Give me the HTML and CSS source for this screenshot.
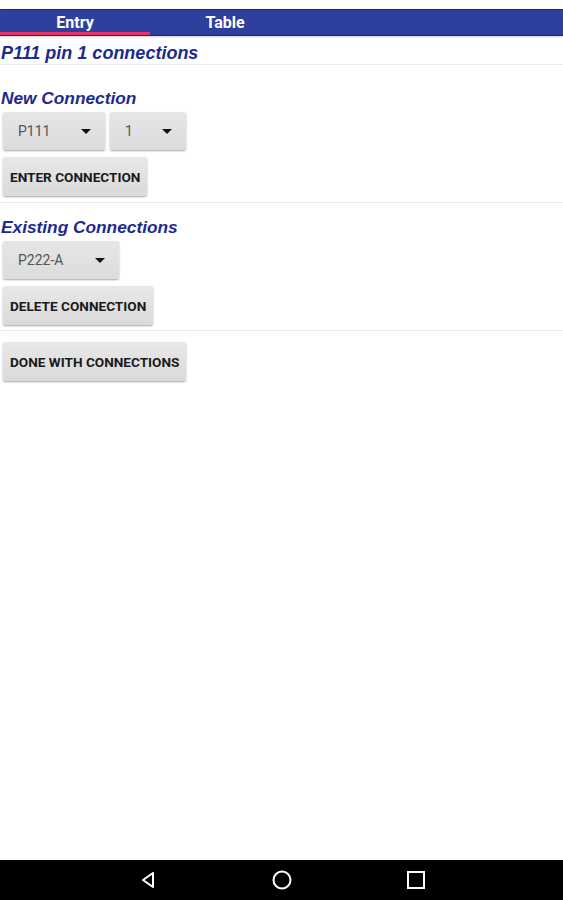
FILE: index.html
```html
<!DOCTYPE html>
<html lang="en">

<head>
    <meta charset="UTF-8">
    <meta name="viewport" content="width=device-width, initial-scale=1.0">
    <title>Connections</title>
    <link rel="stylesheet" href="styles.css">
</head>

<body>
    <div class="screen">
        <div class="tab-bar">
            <div class="tab active">Entry</div>
            <div class="tab">Table</div>
        </div>

        <div class="content">
            <div class="title">P111 pin 1 connections</div>

            <div class="section first">
                <div class="heading">New Connection</div>
                <div class="row">
                    <div class="spinner spin-conn">
                        <span>P111</span>
                        <span class="arrow"></span>
                    </div>
                    <div class="spinner spin-pin">
                        <span>1</span>
                        <span class="arrow"></span>
                    </div>
                </div>
                <button class="btn">ENTER CONNECTION</button>
            </div>

            <div class="section">
                <div class="heading">Existing Connections</div>
                <div class="row">
                    <div class="spinner spin-exist">
                        <span>P222-A</span>
                        <span class="arrow"></span>
                    </div>
                </div>
                <button class="btn">DELETE CONNECTION</button>
            </div>

            <div class="section last">
                <button class="btn">DONE WITH CONNECTIONS</button>
            </div>
        </div>

        <div class="nav-bar">
            <svg width="20" height="20" viewBox="0 0 20 20">
                <path d="M15 3 L5 10 L15 17 Z" fill="none" stroke="#fff" stroke-width="2" stroke-linejoin="round" />
            </svg>
            <svg width="22" height="22" viewBox="0 0 22 22">
                <circle cx="11" cy="11" r="8.5" fill="none" stroke="#fff" stroke-width="2" />
            </svg>
            <svg width="20" height="20" viewBox="0 0 20 20">
                <rect x="2" y="2" width="16" height="16" fill="none" stroke="#fff" stroke-width="2" />
            </svg>
        </div>
    </div>
</body>

</html>
```

FILE: styles.css
```css
body {
    margin: 0;
    padding: 0;
    background-color: #fff;
    font-family: Roboto, "Liberation Sans", sans-serif;
}

.screen {
    height: 900px;
    display: flex;
    flex-direction: column;
    padding-top: 9px;
    box-sizing: border-box;
}

/* tabs */
.tab-bar {
    display: flex;
    height: 27px;
    background-color: #2f3f9e;
    border-top: 1px solid #1a2788;
    border-bottom: 1px solid #1a2788;
    box-sizing: border-box;
    box-shadow: 0 1px 2px rgba(0, 0, 0, 0.2);
}

.tab {
    width: 150px;
    color: #fff;
    font-weight: bold;
    font-size: 16px;
    text-align: center;
    line-height: 26px;
    box-sizing: border-box;
}

.tab.active {
    border-bottom: 3px solid #e4346c;
}

.content {
    flex: 1;
}

.title,
.heading {
    color: #1c2a8e;
    font-family: "Liberation Sans", Arial, sans-serif;
    font-weight: bold;
    font-style: italic;
    font-size: 17.3px;
    padding-left: 1px;
}

.title {
    font-size: 18px;
    padding-top: 7px;
    height: 21px;
    border-bottom: 1px solid #ececec;
}

.heading {
    height: 20px;
    line-height: 20px;
}

.section {
    border-bottom: 1px solid #ececec;
    padding: 14px 0 5px;
}

.section.first {
    padding: 23px 0 6px;
}

.section.last {
    border-bottom: none;
    padding-top: 11px;
}

.row {
    display: flex;
    gap: 5px;
    padding: 4px 0 0 3px;
}

.spinner {
    height: 38px;
    display: flex;
    align-items: center;
    justify-content: space-between;
    padding: 0 14px 0 15px;
    box-sizing: border-box;
    background: linear-gradient(#e6e6e6, #dcdcdc);
    border-radius: 2px;
    box-shadow: 0 1px 2px rgba(0, 0, 0, 0.35);
    color: #555;
    font-size: 14px;
}

.spin-conn {
    width: 102px;
}

.spin-pin {
    width: 76px;
}

.spin-exist {
    width: 116px;
}

.arrow {
    width: 0;
    height: 0;
    border-left: 5px solid transparent;
    border-right: 5px solid transparent;
    border-top: 5px solid #111;
    margin-top: 1px;
}

.btn {
    display: block;
    margin: 7px 0 0 3px;
    height: 39px;
    padding: 0 7px;
    border: none;
    border-radius: 2px;
    background: linear-gradient(#e8e8e8, #dadada);
    box-shadow: 0 1px 2px rgba(0, 0, 0, 0.35);
    font-family: Roboto, "Liberation Sans", sans-serif;
    font-weight: bold;
    font-size: 13.6px;
    color: #1a1a1a;
}

.section.last .btn {
    margin-top: 0;
}

/* system navigation */
.nav-bar {
    height: 40px;
    background-color: #000;
    display: flex;
    align-items: center;
    justify-content: center;
    gap: 113px;
}
```
